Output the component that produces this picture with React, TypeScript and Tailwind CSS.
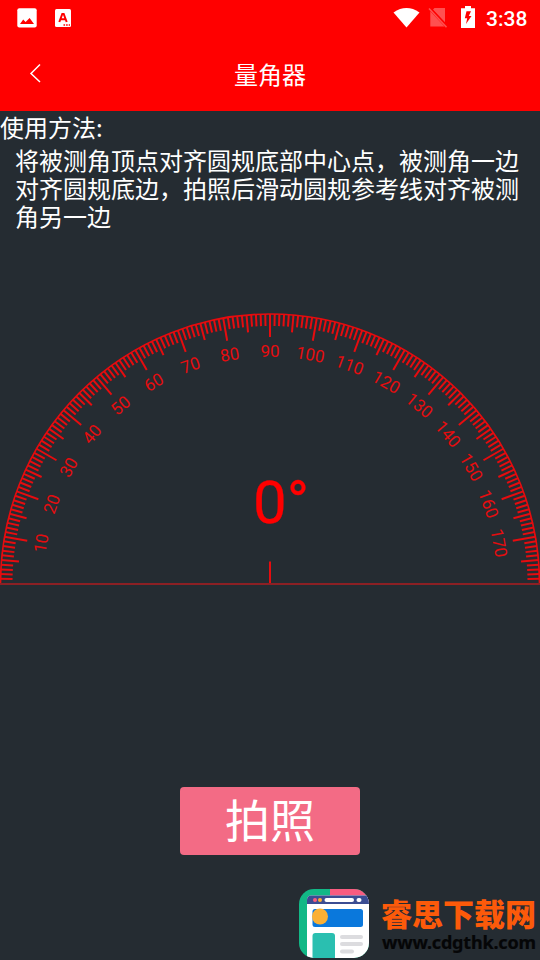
const CENTER_X = 270;
const CENTER_Y = 270.5;
const RADIUS = 269.5;

const ticks = Array.from({ length: 179 }, (_, i) => i + 1);
const labels = Array.from({ length: 17 }, (_, i) => (i + 1) * 10);

const tickLength = (deg: number) => {
  if (deg % 10 === 0) return 23;
  if (deg % 5 === 0) return 17.5;
  return 12;
};

const StatusBar = () => {
  return (
    <div className="h-9 flex items-center justify-between pl-[17px] pr-3 text-white">
      <div className="flex items-center gap-[18px]">
        <svg className="w-5 h-5" viewBox="0 0 20 20">
          <rect x="0.3" y="0.3" width="19.4" height="19.2" rx="2" fill="#fff" />
          <path d="M3 16 L6.2 11.5 L8.6 14 L12.6 10 L17 16 Z" fill="#f00" />
        </svg>
        <svg className="w-4 h-[18px]" viewBox="0 0 16 18">
          <rect width="16" height="18" rx="1.5" fill="#fff" />
          <path
            d="M4.3 13 L7.3 5 H8.7 L11.7 13 M5.5 10.3 H10.5"
            fill="none"
            stroke="#f00"
            strokeWidth="2"
          />
          <path d="M8.5 15.9 H15" stroke="#f00" strokeWidth="1.5" strokeDasharray="1.6 1" />
        </svg>
      </div>
      <div className="flex items-center">
        <svg className="w-[27px] h-[22px]" viewBox="0 0 27 22">
          <path d="M0.5 5.4 Q13.5 -3.3 26.5 5.4 L13.5 20.5 Z" fill="#fff" />
        </svg>
        <svg className="w-5 h-[22px] ml-[8px]" viewBox="0 0 20 22">
          <path d="M6.5 1 H17 V15.2 L5 2.5 Z M2.3 4.3 L16.5 19.5 H2.3 Z" fill="#ff5050" />
          <path d="M1 1.5 L18.5 20.3" stroke="#ff5050" strokeWidth="1.5" />
        </svg>
        <svg className="w-[14px] h-[22px] ml-[13px] -mt-0.5" viewBox="0 0 14 22">
          <path d="M0 2.2 H4 V0 H10 V2.2 H14 V22 H0 Z" fill="#fff" />
          <path d="M5.5 5.2 L3.8 12.3 H6.2 L5 18 L10.5 10 H7.8 L10 5.2 Z" fill="#f00" />
        </svg>
        <span className="ml-[11px] w-[42px] font-[Roboto,sans-serif] text-[21px] leading-5 font-medium whitespace-nowrap pt-0.5">
          3:38
        </span>
      </div>
    </div>
  );
};

const Header = () => {
  return (
    <header className="h-[111px] bg-[#ff0000]">
      <StatusBar />
      <div className="h-[73px] grid grid-cols-[1fr_auto_1fr] items-center text-white">
        <svg className="w-3 h-5 ml-[29px]" viewBox="0 0 12 20" fill="none">
          <path d="M11 1.5 L2 10.5 L11 19" stroke="#fff" strokeWidth="1.5" />
        </svg>
        <h1 className="text-2xl pt-0.5">量角器</h1>
      </div>
    </header>
  );
};

const Protractor = () => {
  return (
    <svg className="block w-[540px] h-[273px]" viewBox="0 0 540 273">
      <g fill="none" stroke="#e60c0f">
        <path d="M0.5 270.5 A269.5 269.5 0 0 1 539.5 270.5" strokeWidth="1.6" />
        {ticks.map((deg) => (
          <path
            key={deg}
            d={`M${CENTER_X - RADIUS} ${CENTER_Y} h${tickLength(deg)}`}
            strokeWidth="2"
            transform={`rotate(${deg} ${CENTER_X} ${CENTER_Y})`}
          />
        ))}
        <path d="M270 248.5 V271" strokeWidth="2" />
      </g>
      <path d="M0 271 H540" stroke="#8c2024" strokeWidth="2" />
      <g fill="#e60c0f" fontFamily="Roboto, sans-serif" fontSize="17" textAnchor="middle">
        {labels.map((deg) => (
          <text
            key={deg}
            x={CENTER_X}
            y="44"
            transform={`rotate(${deg - 90} ${CENTER_X} ${CENTER_Y})`}
          >
            {deg}
          </text>
        ))}
      </g>
      <text
        x="253"
        y="209.5"
        fill="#f00"
        stroke="#f00"
        strokeWidth="0.3"
        fontFamily="Roboto, sans-serif"
        fontSize="60"
      >
        0°
      </text>
    </svg>
  );
};

const SiteLogo = () => {
  return (
    <svg className="w-[70px] h-[70px]" viewBox="0 0 70 70">
      <defs>
        <clipPath id="logo-frame">
          <rect width="70" height="69" rx="15" />
        </clipPath>
      </defs>
      <g clipPath="url(#logo-frame)">
        <rect width="70" height="70" fill="#12b886" />
        <path d="M31 0 H70 V20 H31 Z" fill="#f95c80" />
        <path d="M8 70 V11 Q8 6.5 12.5 6.5 H70 V70 Z" fill="#fff" />
        <path d="M8 15 V11 Q8 6.5 12.5 6.5 H70 V15 Z" fill="#3b4d93" />
        <circle cx="16" cy="11" r="2" fill="#f95c80" />
        <circle cx="21" cy="11" r="2" fill="#fbb034" />
        <rect x="25.5" y="9" width="29.5" height="4" rx="2" fill="#fff" />
        <rect x="57.5" y="9" width="5" height="4" rx="2" fill="#fff" />
        <rect x="13.5" y="20" width="50.5" height="18" rx="2.5" fill="#0a78dc" />
        <circle cx="21" cy="27.5" r="8" fill="#fbb034" />
        <path d="M13.5 70 V47 Q13.5 44 16.5 44 H33 Q36 44 36 47 V70 Z" fill="#2abfb0" />
        <g fill="#dcdcdf">
          <rect x="41" y="46" width="23" height="4" rx="2" />
          <rect x="41" y="53" width="23" height="4" rx="2" />
          <rect x="41" y="60.5" width="14" height="4" rx="2" />
        </g>
      </g>
    </svg>
  );
};

const Watermark = () => {
  return (
    <div className="absolute left-[299px] top-[889px] flex">
      <SiteLogo />
      <div className="ml-3 pt-[7px] whitespace-nowrap">
        <p className="text-[31px] leading-[33px] font-black text-[#fc5a0a]">睿思下载网</p>
        <svg className="block w-[157px] h-6" viewBox="0 0 157 24">
          <text
            x="1"
            y="19.5"
            textLength="154"
            fontFamily="'Noto Sans', sans-serif"
            fontSize="18"
            fontWeight="700"
            fill="#050607"
            stroke="#050607"
            strokeWidth="0.2"
          >
            www.cdgthk.com
          </text>
        </svg>
      </div>
    </div>
  );
};

export default function App() {
  return (
    <div className="relative w-[540px] h-[960px] overflow-hidden bg-[#252c32] font-['Noto_Sans_CJK_SC',sans-serif]">
      <Header />
      <section className="h-[202px] text-2xl leading-7 text-white">
        <h2 className="pt-[2px]">使用方法:</h2>
        <p className="pl-[15px] pt-[5px] whitespace-nowrap">
          将被测角顶点对齐圆规底部中心点，被测角一边
          <br />
          对齐圆规底边，拍照后滑动圆规参考线对齐被测
          <br />
          角另一边
        </p>
      </section>
      <Protractor />
      <button className="block w-[180px] h-[68px] mt-[201px] mx-auto rounded bg-[#f36b85] text-[45px] leading-[64px] pb-1 text-white">
        拍照
      </button>
      <Watermark />
    </div>
  );
}
